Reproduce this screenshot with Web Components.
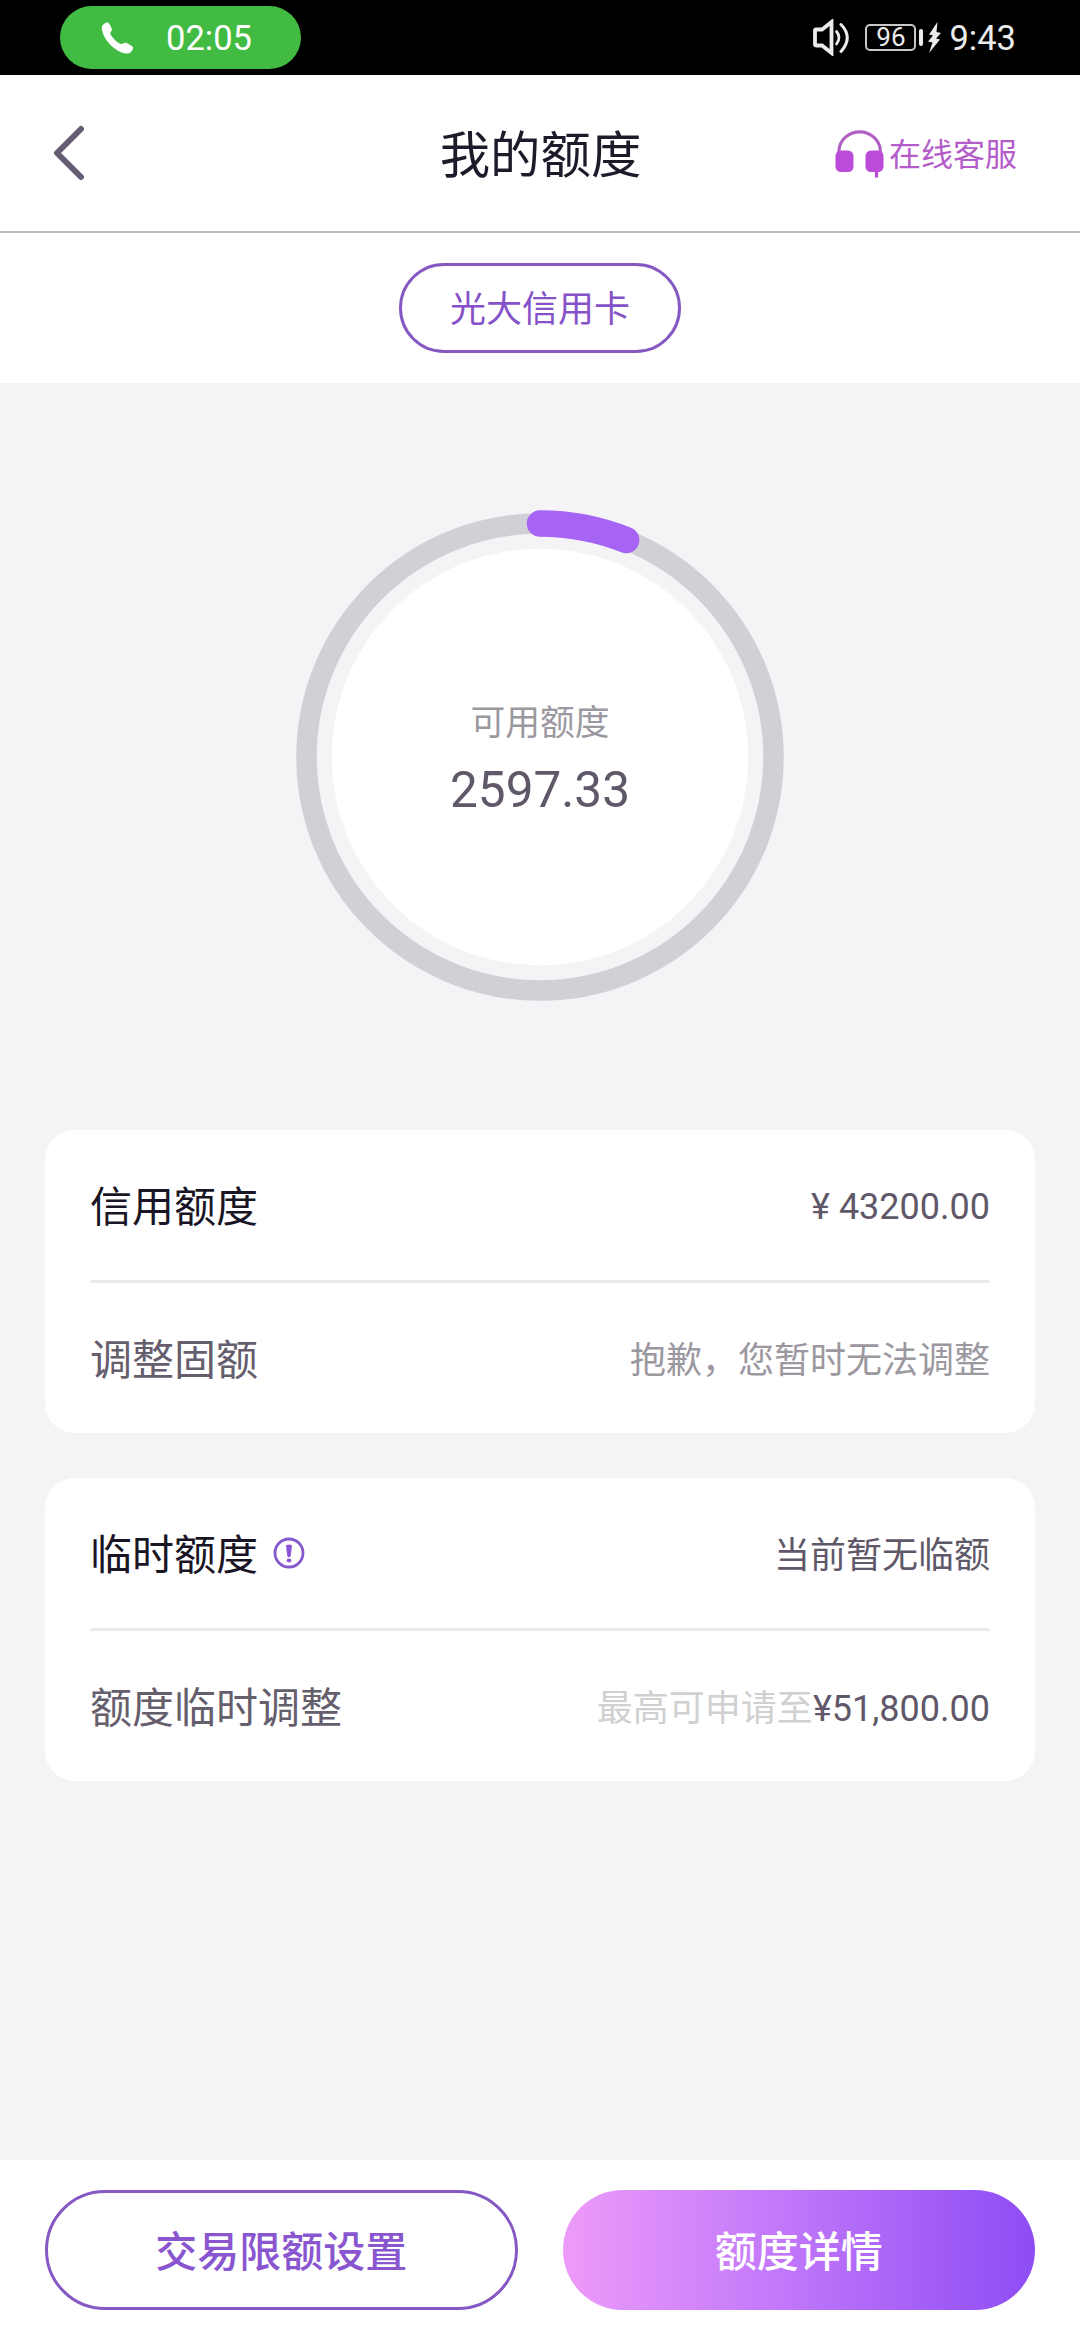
<!DOCTYPE html>
<html lang="zh-CN">
<head>
<meta charset="utf-8">
<title>我的额度</title>
<style>
html,body{margin:0;padding:0;background:#f4f4f6}
body{font-family:Roboto,"Noto Sans CJK SC",sans-serif;width:1080px}
</style>
</head>
<body>
<quota-page></quota-page>
<script>
const define = (name, html) => {
  const t = document.createElement('template');
  t.innerHTML = html;
  customElements.define(name, class extends HTMLElement {
    constructor() {
      super();
      this.attachShadow({mode: 'open'}).append(t.content.cloneNode(true));
    }
  });
};

define('status-bar', `
<style>
:host{display:flex;justify-content:space-between;height:75px;background:#000;box-sizing:border-box;padding:6px 64px 6px 60px;color:#ececec;font-size:34.500px}
.call{display:flex;align-items:center;width:241px;height:63px;border-radius:32px;background:#42bb43;color:#fff;box-sizing:border-box;padding-left:41px;gap:32px}
.time{line-height:62px;padding-top:1px}
.right{display:flex;align-items:center;height:63px}
.bat{width:51px;height:27px;box-sizing:border-box;border:2px solid #c9c9c9;border-radius:5px;font-size:26px;line-height:23px;text-align:center;margin-left:16px}
.nub{width:4px;height:17px;border-radius:2px;background:#ececec;margin-left:3px}
svg{display:block}
.bolt{margin:0 8px 0 5px}
</style>
<div class="call">
<svg width="33" height="32" viewBox="0 0 33 32" fill="#fff"><path d="M.8 6C.5 3 4.500 .3 6.700 .5C8 .7 11.200 6.500 11 7.800C10.800 9 9 10.200 9.300 11.800C10.500 15 16 20.800 19.500 22C21.500 22.300 23 20.300 25 20.800C26.500 21.300 31.500 24 32 25.300C32.500 27 30 31.500 27 31.600C16 32 1.500 18 .8 6Z"/></svg>
<span class="time">02:05</span></div>
<div class="right">
<svg width="36" height="37" viewBox="0 0 36 37" fill="none" stroke="#ececec"><path d="M2 11.500Q2 10.500 3 10.500H9L18.500 3V34L9 26.500H3Q2 26.500 2 25.500Z" stroke-width="3.800"/><path d="M23.500 12.500Q28.500 18.500 23.500 25" stroke-width="2.800" stroke-linecap="round"/><path d="M28 5.500Q40.500 18.500 28 32.500" stroke-width="3" stroke-linecap="round"/></svg>
<div class="bat">96</div><div class="nub"></div>
<svg class="bolt" width="13" height="31" viewBox="0 0 13 31" fill="#ececec"><path d="M9.500 0L1 12.500L5 13.500L0 19.500L4.500 20.500L1 31L12 17.500L8 16.500L13 11L8.500 10Z"/></svg>
<span class="time">9:43</span></div>`);

define('nav-bar', `
<style>
:host{display:grid;grid-template-columns:1fr auto 1fr;align-items:center;height:158px;box-sizing:border-box;border-bottom:2px solid #b9b9b9;background:#fff;padding:0 63px 0 53px}
.t{font-size:50.400px;line-height:60px;color:#1f1a29;padding:6px 0 0 11px}
.s{display:flex;justify-content:flex-end;align-items:center;gap:5px;font-size:32px;line-height:48px;color:#b45cc9}
.s span{padding-top:3px}
svg{display:block}
</style>
<svg width="33" height="56" viewBox="0 0 33 56" fill="none" stroke="#675c72" stroke-width="6" stroke-linecap="round" stroke-linejoin="round"><path d="M28 4L4 28L28 52"/></svg>
<div class="t"><slot></slot></div>
<div class="s"><svg width="49" height="49" viewBox="0 0 49 49"><path d="M4 24V21A20.700 19.500 0 0 1 45.300 21V24" fill="none" stroke="#b25fc4" stroke-width="3.200"/><rect x=".5" y="21.500" width="18" height="21.500" rx="5.500" fill="#bb4bd9"/><rect x="30.500" y="21.500" width="18" height="21.500" rx="5.500" fill="#bb4bd9"/><path d="M41.500 42V48.500" stroke="#bb4bd9" stroke-width="3.200"/></svg><span><slot name="service"></slot></span></div>`);

define('card-tabs', `
<style>
:host{display:flex;justify-content:center;align-items:center;height:150px;background:#fff}
div{box-sizing:border-box;width:282px;height:90px;border:3px solid #8558c4;border-radius:45px;text-align:center;font-size:36px;line-height:88px;color:#8552c8}
</style><div><slot></slot></div>`);

define('quota-ring', `
<style>
:host{display:grid;place-items:center;height:747px}
svg,.c{grid-area:1/1}
.c{display:flex;flex-direction:column;align-items:center;padding-top:4px}
.l{font-size:34.800px;line-height:50px;color:#9b98a0}
.v{font-size:49.500px;line-height:60px;margin-top:12px;color:#605868}
</style>
<svg width="500" height="500" viewBox="-250 -250 500 500" fill="none"><circle r="208.300" fill="#fff"/><circle r="233.500" stroke="#d2d0d7" stroke-width="20.500"/><path d="M0 -233.500A233.500 233.500 0 0 1 86.100 -217" stroke="#a663f4" stroke-width="26.500" stroke-linecap="round"/></svg>
<div class="c"><span class="l"><slot></slot></span><span class="v"><slot name="value"></slot></span></div>`);

define('quota-card', `
<style>
:host{display:block;margin:0 45px 45px;padding:0 45px;background:#fff;border-radius:30px;height:303px}
hr{margin:0;border:0;height:3px;background:#ebebeb}
</style><slot name="top"></slot><hr><slot></slot>`);

define('quota-row', `
<style>
:host{display:flex;justify-content:space-between;align-items:center;height:150px;box-sizing:border-box;padding-top:6px;color:#655e6c;--value:#605868}
:host([strong]){color:#1a1524}
:host([muted]){--value:#9b98a0}
:host([amount]) .v{padding-bottom:2px}
.l{display:flex;align-items:center;gap:15px;font-size:42px;line-height:60px}
.v{font-size:36px;line-height:54px;color:var(--value)}
::slotted(i){font-style:normal;color:#d0d0d0}
</style><span class="l"><slot name="label"></slot></span><span class="v"><slot></slot></span>`);

define('info-icon', `
<style>:host{display:block;margin-bottom:7px}svg{display:block}</style>
<svg width="32" height="32" viewBox="0 0 32 32"><circle cx="16" cy="16" r="14" fill="none" stroke="#8558cb" stroke-width="2.800"/><path d="M13 9Q13 7.500 16 7.500T19 9L17.700 19Q17.400 20.200 16 20.200T14.300 19Z" fill="#8c55d8"/><ellipse cx="16" cy="23.500" rx="2.300" ry="1.900" fill="#8c55d8"/></svg>`);

define('action-button', `
<style>
:host{display:block;box-sizing:border-box;width:472.500px;height:120px;border-radius:60px;border:3px solid #8558c4;text-align:center;font-size:42px;font-weight:500;line-height:119px;color:#8a56d0}
:host([primary]){border:0;line-height:125px;color:#fff;background:linear-gradient(90deg,#ed9bf9,#c57bfa 42%,#8e4cf4)}
</style><slot></slot>`);

define('action-bar', `
<style>:host{display:flex;gap:45px;height:180px;box-sizing:border-box;padding:30px 45px;background:#fff}</style><slot></slot>`);

define('quota-page', `
<style>:host{display:flex;flex-direction:column;width:1080px;height:2340px;background:#f4f4f6}
.sp{flex:1}</style>
<status-bar></status-bar>
<nav-bar>我的额度<span slot="service">在线客服</span></nav-bar>
<card-tabs>光大信用卡</card-tabs>
<quota-ring>可用额度<span slot="value">2597.33</span></quota-ring>
<quota-card>
<quota-row slot="top" strong amount><span slot="label">信用额度</span>¥ 43200.00</quota-row>
<quota-row muted><span slot="label">调整固额</span>抱歉，您暂时无法调整</quota-row>
</quota-card>
<quota-card>
<quota-row slot="top" strong><span slot="label">临时额度</span><info-icon slot="label"></info-icon>当前暂无临额</quota-row>
<quota-row><span slot="label">额度临时调整</span><i>最高可申请至</i>¥51,800.00</quota-row>
</quota-card>
<div class="sp"></div>
<action-bar><action-button>交易限额设置</action-button><action-button primary>额度详情</action-button></action-bar>`);
</script>
</body>
</html>
